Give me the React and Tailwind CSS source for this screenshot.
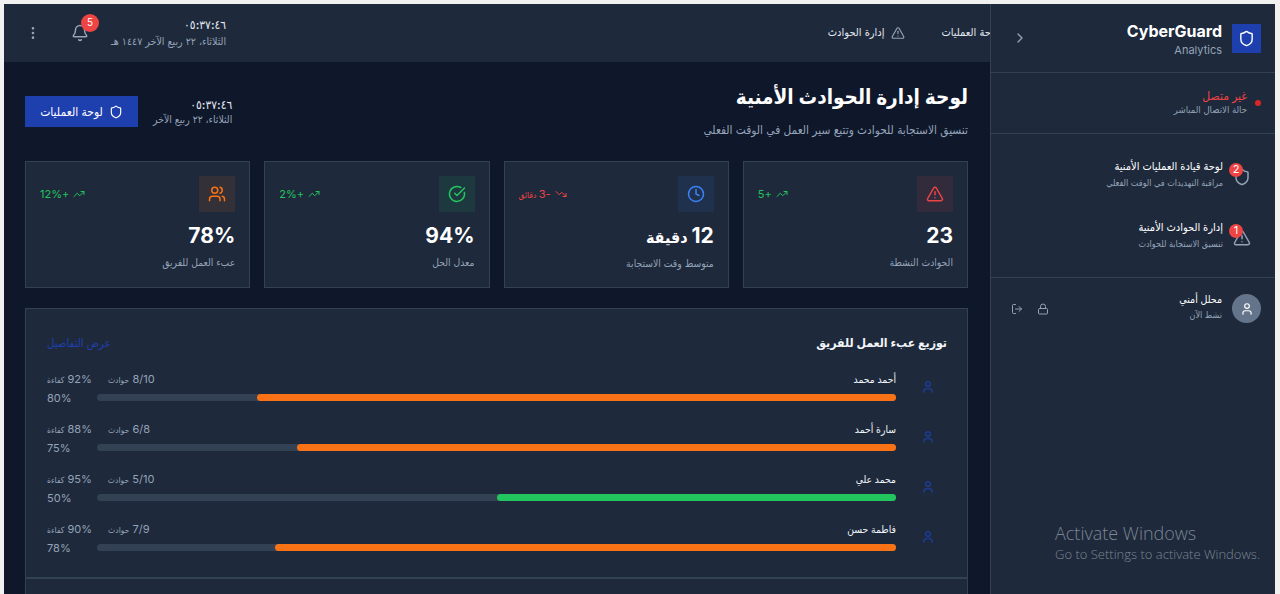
import React from "react";
import {
  AlertTriangle,
  Bell,
  CheckCircle,
  ChevronRight,
  Clock,
  EllipsisVertical,
  Lock,
  LogOut,
  Shield,
  TrendingDown,
  TrendingUp,
  User,
  Users,
} from "lucide-react";

const stats = [
  { icon: AlertTriangle, tone: "text-[#ef4444] bg-[#ef4444]/10", trend: "+5", up: true, value: "23", label: "الحوادث النشطة" },
  { icon: Clock, tone: "text-[#3b82f6] bg-[#3b82f6]/10", trend: "-3", trendUnit: "دقائق", up: false, value: "12", unit: "دقيقة", label: "متوسط وقت الاستجابة" },
  { icon: CheckCircle, tone: "text-[#22c55e] bg-[#22c55e]/10", trend: "+2%", up: true, value: "94%", label: "معدل الحل" },
  { icon: Users, tone: "text-[#f97316] bg-[#f97316]/10", trend: "+12%", up: true, value: "78%", label: "عبء العمل للفريق" },
];

const team = [
  { name: "أحمد محمد", cases: "8/10", eff: "92%", load: 80, fill: 80, bar: "bg-[#f97316]" },
  { name: "سارة أحمد", cases: "6/8", eff: "88%", load: 75, fill: 75, bar: "bg-[#f97316]" },
  { name: "محمد علي", cases: "5/10", eff: "95%", load: 50, fill: 50, bar: "bg-[#22c55e]" },
  { name: "فاطمة حسن", cases: "7/9", eff: "90%", load: 78, fill: 77.75, bar: "bg-[#f97316]" },
];

const navItems = [
  { icon: Shield, badge: 2, title: "لوحة قيادة العمليات الأمنية", sub: "مراقبة التهديدات في الوقت الفعلي" },
  { icon: AlertTriangle, badge: 1, title: "إدارة الحوادث الأمنية", sub: "تنسيق الاستجابة للحوادث" },
];

const Sidebar = () => (
  <aside className="flex h-full w-[285px] shrink-0 flex-col border-l border-[#334155] bg-[#1e293b]">
    <div className="flex h-[69px] shrink-0 items-center justify-between border-b border-[#334155] pl-[21px] pr-[14px]">
      <div className="flex items-center gap-[10px]">
        <div className="flex h-[29px] w-[29px] items-center justify-center bg-[#1e40af] text-white">
          <Shield className="h-[17px] w-[17px]" />
        </div>
        <div dir="ltr" className="mt-[2px] text-right">
          <div className="text-base leading-[22px] font-bold text-white">CyberGuard</div>
          <div className="text-[11px] leading-[16px] text-[#94a3b8]">Analytics</div>
        </div>
      </div>
      <ChevronRight className="h-4 w-4 text-[#94a3b8]" />
    </div>

    <div className="flex h-[61px] shrink-0 items-center gap-[8px] border-b border-[#334155] pr-[14px]">
      <span className="h-[6px] w-[6px] rounded-full bg-[#dc2626]" />
      <div className="mt-[-2px]">
        <div className="text-xs leading-[15px] font-medium text-[#ef4444]">غير متصل</div>
        <div className="text-[9.5px] leading-[14px] text-[#94a3b8]">حالة الاتصال المباشر</div>
      </div>
    </div>

    <nav className="flex h-[144px] shrink-0 flex-col border-b border-[#334155] pt-[12px]">
      {navItems.map((item) => (
        <div key={item.title} className="flex h-[61px] items-center gap-[10px] pr-[24px]">
          <div className="relative">
            <item.icon className="h-[18px] w-[18px] text-[#94a3b8]" />
            <span className="absolute right-[8px] top-[-5px] flex h-[14px] w-[14px] items-center justify-center rounded-full bg-[#ef4444] text-[11px] text-white">
              {item.badge}
            </span>
          </div>
          <div className="mt-[-5px]">
            <div className="text-[11px] leading-[16px] font-medium text-white">{item.title}</div>
            <div className="mt-[1px] text-[9px] leading-[15px] text-[#94a3b8]">{item.sub}</div>
          </div>
        </div>
      ))}
    </nav>

    <div className="flex items-center justify-between pb-[16px] pl-[20px] pr-[14px] pt-[16px]">
      <div className="flex items-center gap-[10px]">
        <div className="flex h-[29px] w-[29px] items-center justify-center rounded-full bg-[#64748b] text-white">
          <User className="h-[14px] w-[14px]" />
        </div>
        <div className="mt-[-4px]">
          <div className="text-[10.5px] leading-[16px] font-medium text-white">محلل أمني</div>
          <div className="text-[9px] leading-[14px] text-[#94a3b8]">نشط الآن</div>
        </div>
      </div>
      <div className="flex items-center gap-[14px] text-[#94a3b8]">
        <Lock className="h-3 w-3" />
        <LogOut className="h-3 w-3" />
      </div>
    </div>
  </aside>
);

const TopBar = () => (
  <header className="flex h-[58px] shrink-0 items-center justify-between overflow-hidden border-b border-[#1e293b] bg-[#1e293b]">
    <div className="mr-[-29px] flex items-center gap-[37px] text-[11px] text-[#e2e8f0]">
      <div className="flex items-center gap-[6px] whitespace-nowrap">
        <Shield className="h-[14px] w-[14px]" />
        <span>لوحة العمليات</span>
      </div>
      <div className="flex items-center gap-[6px] whitespace-nowrap">
        <AlertTriangle className="h-[14px] w-[14px] text-[#94a3b8]" />
        <span>إدارة الحوادث</span>
      </div>
    </div>
    <div className="flex items-center">
      <div className="text-right">
        <div className="text-xs leading-[16px] font-medium tracking-[1.5px] text-[#e2e8f0]">٠٥:٣٧:٤٦</div>
        <div className="mt-[2px] text-[10.6px] leading-[14px] text-[#94a3b8]">الثلاثاء، ٢٢ ربيع الآخر ١٤٤٧ هـ</div>
      </div>
      <div className="relative mr-[22px]">
        <Bell className="h-[18px] w-[18px] text-[#94a3b8]" />
        <span className="absolute left-[10px] top-[-10px] flex h-[18px] w-[18px] items-center justify-center rounded-full bg-[#ef4444] text-[10px] text-white">
          5
        </span>
      </div>
      <EllipsisVertical className="ml-[21px] mr-[30px] h-4 w-4 text-[#94a3b8]" />
    </div>
  </header>
);

const StatCard = ({ stat }) => (
  <div className="h-[127px] border border-[#334155] bg-[#1e293b] p-[14px]">
    <div className="flex items-center justify-between">
      <div className={`flex h-9 w-9 items-center justify-center ${stat.tone}`}>
        <stat.icon className="h-[18px] w-[18px]" />
      </div>
      <div className={`flex items-center gap-[4px] text-[11px] ${stat.up ? "text-[#22c55e]" : "text-[#ef4444]"}`}>
        {stat.up ? <TrendingUp className="h-3 w-3" /> : <TrendingDown className="h-3 w-3" />}
        <span>
          {stat.trend}
          {stat.trendUnit && <span className="text-[8.5px]"> {stat.trendUnit}</span>}
        </span>
      </div>
    </div>
    <div className="mt-[10px] text-[21px] leading-[28px] font-bold text-white">
      {stat.value}
      {stat.unit && <span className="text-[16px]"> {stat.unit}</span>}
    </div>
    <div className="mt-[4px] text-[10.3px] leading-[16px] text-[#94a3b8]">{stat.label}</div>
  </div>
);

const TeamRow = ({ member }) => (
  <div className="flex h-[36px] items-center gap-[25px] pr-[12px]">
    <User className="mb-[2px] h-[14px] w-[14px] text-[#1e40af]" />
    <div className="flex-1">
      <div className="flex items-center justify-between">
        <span className="text-[10.3px] leading-[16px] font-medium text-[#f1f5f9]">{member.name}</span>
        <div className="flex items-center gap-[16px] text-[11px] leading-[16px] text-[#94a3b8]">
          <span>{member.cases} <span className="text-[8.5px]">حوادث</span></span>
          <span>{member.eff} <span className="text-[8.5px]">كفاءة</span></span>
        </div>
      </div>
      <div className="mt-[2px] flex items-center justify-between">
        <div className="flex h-[7px] w-[799px] justify-start rounded-full bg-[#334155]">
          <div className={`h-[7px] rounded-full ${member.bar}`} style={{ width: `${member.fill}%` }} />
        </div>
        <span className="text-[11px] leading-[16px] text-[#94a3b8]">{member.load}%</span>
      </div>
    </div>
  </div>
);

export default function App() {
  return (
    <div dir="rtl" className="relative flex h-[594px] w-[1280px] overflow-hidden bg-[#f1f1f1] pl-[4px] pr-[5px] pt-[4px] font-['Inter','DejaVu_Sans_Condensed','DejaVu_Sans',sans-serif]">
      <Sidebar />
      <main className="flex h-full min-w-0 flex-1 flex-col bg-[#0f172a]">
        <TopBar />
        <div className="pl-[21px] pr-[22px] pt-[19px]">
          <div className="flex items-start justify-between">
            <div>
              <h1 className="text-[20.6px] leading-[32px] font-bold text-white">لوحة إدارة الحوادث الأمنية</h1>
              <p className="mt-[9px] text-[11.8px] leading-[16px] text-[#94a3b8]">تنسيق الاستجابة للحوادث وتتبع سير العمل في الوقت الفعلي</p>
            </div>
            <div className="flex items-center gap-[15px] pt-[15px]">
              <div>
                <div className="text-xs leading-[16px] font-medium tracking-[0.5px] text-[#e2e8f0]">٠٥:٣٧:٤٦</div>
                <div className="text-[10.4px] leading-[14px] text-[#94a3b8]">الثلاثاء، ٢٢ ربيع الآخر</div>
              </div>
              <button className="flex h-[31px] w-[113px] items-center justify-center gap-[6px] bg-[#1e40af] text-xs text-white">
                <Shield className="h-[14px] w-[14px]" />
                <span>لوحة العمليات</span>
              </button>
            </div>
          </div>

          <div className="mt-[23px] grid grid-cols-4 gap-[14px]">
            {stats.map((stat) => (
              <StatCard key={stat.label} stat={stat} />
            ))}
          </div>

          <section className="mt-[20px] border border-[#334155] bg-[#1e293b]">
            <div className="border-b-2 border-[#334155] pb-[21px] pl-[21px] pr-[20px] pt-[24px]">
              <div className="flex items-center justify-between">
                <h2 className="text-[12.2px] leading-[20px] font-bold text-[#f1f5f9]">توزيع عبء العمل للفريق</h2>
                <span className="text-[11.3px] text-[#1e40af]">عرض التفاصيل</span>
              </div>
              <div className="mt-[17px] flex flex-col gap-[14px]">
                {team.map((member) => (
                  <TeamRow key={member.name} member={member} />
                ))}
              </div>
            </div>
            <div className="flex justify-end pl-[103px] pt-[15px]">
              <div className="h-[20px] w-[58px] rounded-t-sm border-t border-[#475569]" />
            </div>
          </section>
        </div>
      </main>
      <div dir="ltr" className="absolute left-[1055px] top-[521px] font-['Open_Sans',sans-serif] font-light text-[#7b8593]">
        <div className="text-[18px] leading-[24px]">Activate Windows</div>
        <div className="text-[13px] leading-[18px]">Go to Settings to activate Windows.</div>
      </div>
    </div>
  );
}
